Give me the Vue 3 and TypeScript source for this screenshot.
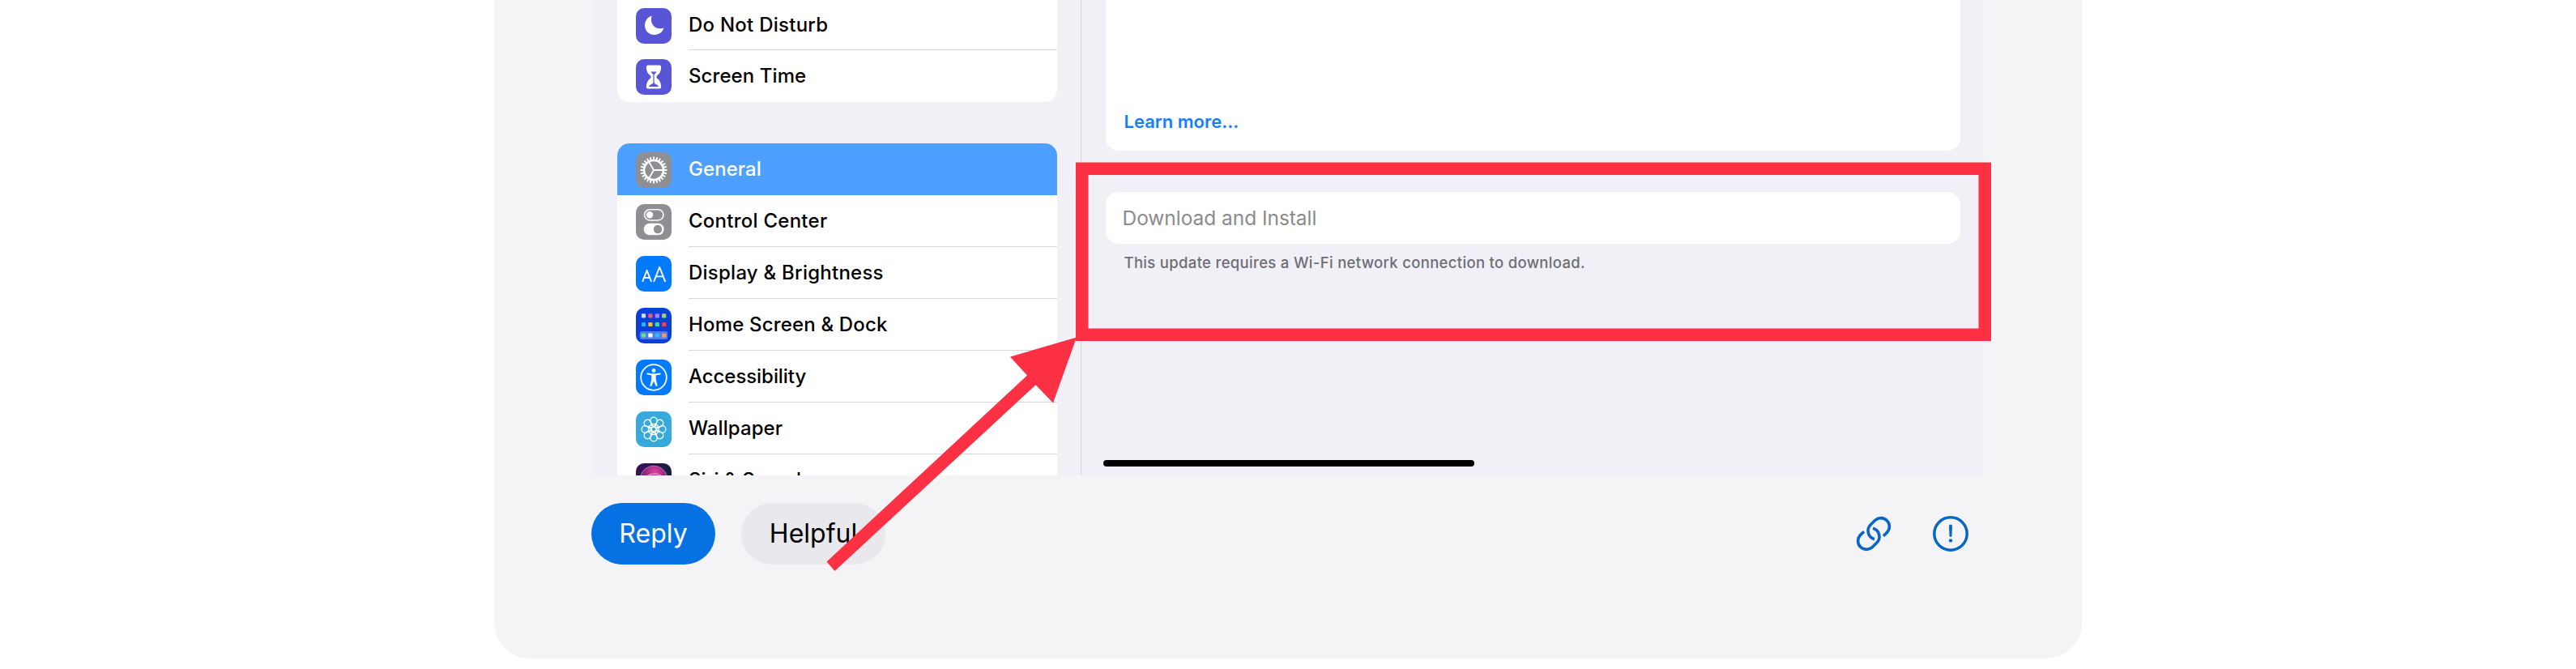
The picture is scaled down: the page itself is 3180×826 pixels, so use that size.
<script setup lang="ts">
interface Item {
  icon: string
  label: string
  active?: boolean
  spacing: string
}

const focusItems: Item[] = [
  { icon: 'moon', label: 'Do Not Disturb', spacing: '0.25px' },
  { icon: 'hourglass', label: 'Screen Time', spacing: '0.08px' },
]

const generalItems: Item[] = [
  { icon: 'gear', label: 'General', active: true, spacing: '0.05px' },
  { icon: 'control', label: 'Control Center', spacing: '0.25px' },
  { icon: 'display', label: 'Display & Brightness', spacing: '0.24px' },
  { icon: 'home', label: 'Home Screen & Dock', spacing: '0.17px' },
  { icon: 'access', label: 'Accessibility', spacing: '-0.06px' },
  { icon: 'wallpaper', label: 'Wallpaper', spacing: '0.08px' },
  { icon: 'siri', label: 'Siri & Search', spacing: '0.1px' },
]

const groups = [focusItems, generalItems]

const teeth = Array.from({ length: 24 }, (_, i) => i * 15)
const petals = Array.from({ length: 8 }, (_, i) => i * 45)

const apps = [
  ['#d5d9ea', '#f4567c', '#b27bfb', '#a5d65a'],
  ['#1fb6ff', '#fdbc1f', '#3fd8a8', '#f04444'],
  ['#5fe686', '#ffffff', '#22c3ff', '#f79b5c'],
]
const appRows = [7.3, 17.9, 31.4]
</script>

<template>
  <div class="page">
    <main class="card">
      <section class="shot">
        <aside class="sidebar">
          <div v-for="(group, g) in groups" :key="g" class="group" :class="{ top: g === 0 }">
            <div v-for="item in group" :key="item.label" class="row" :class="{ active: item.active }">
              <svg class="icon" viewBox="0 0 44 44">
                <template v-if="item.icon === 'moon'">
                  <rect width="44" height="44" rx="10" fill="#5856d6" />
                  <path d="M19.6 9.4C14.2 11.2 11 15.8 11 21.2C11 28 16.2 33 22.8 33C28.4 33 33 29.8 34.4 24.6C24.6 27.6 16.400 20 19.6 9.400Z" fill="#fff" />
                </template>
                <template v-else-if="item.icon === 'hourglass'">
                  <rect width="44" height="44" rx="10" fill="#5856d6" />
                  <path d="M15.200 7.500H28.800C30.800 7.500 31.300 8.600 31.100 10.400C30.700 15.500 29.200 17.700 26.200 20.200C25.200 21.100 25.200 22.900 26.200 23.800C29.200 26.300 30.700 28.500 31.100 33.600C31.300 35.400 30.800 36.500 28.800 36.500H15.200C13.200 36.500 12.700 35.400 12.900 33.600C13.300 28.500 14.800 26.300 17.800 23.800C18.800 22.900 18.800 21.100 17.800 20.200C14.800 17.700 13.300 15.500 12.900 10.400C12.700 8.600 13.200 7.500 15.200 7.500Z" fill="#fff" />
                  <path d="M18.300 15.400H25.700C25 17 23 18 22.600 19.200V29C23 30.800 27.400 31.500 28 34H16C16.600 31.500 21 30.800 21.400 29V19.200C21 18 19 17 18.300 15.400Z" fill="#5856d6" />
                </template>
                <template v-else-if="item.icon === 'gear'">
                  <rect width="44" height="44" rx="10" fill="#8e8e93" />
                  <g stroke="#fff" fill="none">
                    <circle cx="22" cy="22" r="12" stroke-width="2.600" />
                    <line v-for="a in teeth" :key="a" x1="22" y1="5.600" x2="22" y2="9.500" stroke-width="2" :transform="`rotate(${a} 22 22)`" />
                    <path d="M22 22H34M22 22L16 11.600M22 22L16 32.400" stroke-width="1.800" />
                  </g>
                </template>
                <template v-else-if="item.icon === 'control'">
                  <rect width="44" height="44" rx="10" fill="#8e8e93" />
                  <rect x="10.500" y="6.700" width="23.500" height="13.200" rx="6.600" fill="none" stroke="#fff" stroke-width="1.500" />
                  <circle cx="17" cy="13.300" r="4.200" fill="#fff" />
                  <rect x="9.700" y="23.700" width="25" height="14.600" rx="7.300" fill="#fff" />
                  <circle cx="27" cy="31" r="5.200" fill="#8e8e93" />
                </template>
                <template v-else-if="item.icon === 'display'">
                  <rect width="44" height="44" rx="10" fill="#007aff" />
                  <g fill="none" stroke="#fff" stroke-width="1.900" stroke-linecap="round" stroke-linejoin="round">
                    <path d="M8.400 31.200L13.600 17.800L18.800 31.200M10.100 27H17.100" />
                    <path d="M22.400 31.200L29.200 13.800L36 31.200M24.800 25.400H33.600" />
                  </g>
                </template>
                <template v-else-if="item.icon === 'home'">
                  <rect width="44" height="44" rx="10" fill="#0b3fd9" />
                  <rect x="4.800" y="29" width="34.400" height="10" rx="2.500" fill="#527be8" />
                  <template v-for="(colors, r) in apps" :key="r">
                    <rect v-for="(c, i) in colors" :key="i" :x="6.900 + i * 8.400" :y="appRows[r]" width="5.200" height="5.200" rx="1.200" :fill="c" />
                  </template>
                </template>
                <template v-else-if="item.icon === 'access'">
                  <rect width="44" height="44" rx="10" fill="#007aff" />
                  <circle cx="22" cy="22" r="15.800" fill="none" stroke="#fff" stroke-width="1.800" />
                  <circle cx="22" cy="13.500" r="2.400" fill="#fff" />
                  <path d="M14.400 17.500L20 18.400H24L29.600 17.500" fill="none" stroke="#fff" stroke-width="2" stroke-linecap="round" />
                  <path d="M19.600 17.800H24.400V24.500L26.400 32.200L24.900 32.700L22.300 26.500H21.700L19.100 32.700L17.600 32.200L19.600 24.500Z" fill="#fff" stroke="#fff" stroke-width="0.600" stroke-linejoin="round" />
                </template>
                <template v-else-if="item.icon === 'wallpaper'">
                  <rect width="44" height="44" rx="10" fill="#36aadc" />
                  <g fill="none" stroke="#fff" stroke-width="1.300">
                    <circle v-for="a in petals" :key="a" cx="22" cy="11.400" r="4.300" :transform="`rotate(${a} 22 22)`" />
                    <path v-for="a in petals" :key="'p' + a" d="M22 19.200L18.800 14.300M22 19.200L25.200 14.300" :transform="`rotate(${a} 22 22)`" />
                    <circle cx="22" cy="22" r="2.800" />
                  </g>
                </template>
                <template v-else>
                  <defs>
                    <linearGradient id="siriBack" x1="0" x2="1">
                      <stop offset="0" stop-color="#3d0d5c" />
                      <stop offset="1" stop-color="#172238" />
                    </linearGradient>
                    <radialGradient id="siriOrb" cx="0.550" cy="0.220" r="0.600">
                      <stop offset="0" stop-color="#e0409c" />
                      <stop offset="0.500" stop-color="#a52b85" />
                      <stop offset="1" stop-color="#5a2a8a" />
                    </radialGradient>
                  </defs>
                  <rect width="44" height="44" rx="10" fill="url(#siriBack)" />
                  <circle cx="22" cy="20" r="16.800" fill="url(#siriOrb)" stroke="#a778a8" stroke-width="1" />
                  <path d="M8 20C16 16 17 12 21 13.500C25 11 30 15 36 18" fill="none" stroke="#d58bd2" stroke-width="1.500" />
                </template>
              </svg>
              <div class="label"><span :style="{ letterSpacing: item.spacing }">{{ item.label }}</span></div>
            </div>
          </div>
        </aside>

        <section class="detail">
          <div class="panel notes"><a class="learn">Learn more...</a></div>
          <div class="panel install">Download and Install</div>
          <p class="hint">This update requires a Wi-Fi network connection to download.</p>
          <div class="home-bar"></div>
        </section>
      </section>

      <footer class="actions">
        <button class="pill reply">Reply</button>
        <button class="pill helpful">Helpful</button>
        <div class="tools">
          <svg viewBox="0 0 44 44" fill="none" stroke="#0a66c4" stroke-width="3.600">
            <path d="M34 24.700L38.900 19.900A10.500 10.500 0 0 0 24.100 5.100L18.100 11.100A10.500 10.500 0 0 0 23 28.700" />
            <path d="M10 19.300L5.100 24.100A10.500 10.500 0 0 0 19.900 38.900L25.900 32.900A10.500 10.500 0 0 0 21 15.300" />
          </svg>
          <svg viewBox="0 0 44 44" fill="none" stroke="#0a66c4">
            <circle cx="22" cy="22" r="20.200" stroke-width="3.500" />
            <path d="M20 12.600a2 2 0 0 1 4 0L23.500 24.500a1.500 1.500 0 0 1-3 0Z" fill="#0a66c4" stroke="none" />
            <circle cx="22" cy="30.400" r="2.200" fill="#0a66c4" stroke="none" />
          </svg>
        </div>
      </footer>
    </main>

    <svg class="annotation" viewBox="0 0 3180 826">
      <rect x="1335.750" y="208.250" width="1114.500" height="205" fill="none" stroke="#fd3044" stroke-width="15.500" />
      <polygon points="1329,416.500 1247,440.500 1268,463.500 1020.500,693.500 1030.500,705 1278.500,475.300 1300,497.500" fill="#fd3044" />
    </svg>
  </div>
</template>

<style>
body {
  margin: 0;
  background: #fff;
}
</style>

<style scoped>
.page {
  position: relative;
  width: 3180px;
  height: 826px;
  overflow: hidden;
  background: #fff;
  font-family: Inter, "Liberation Sans", sans-serif;
}
.card {
  width: 1960px;
  height: 813px;
  margin-left: 610px;
  background: #f4f4f7;
  border-radius: 0 0 44px 44px;
}
.shot {
  display: flex;
  width: 1716px;
  height: 587px;
  margin-left: 122px;
  overflow: hidden;
  background: #f1f0f7;
}
.sidebar {
  box-sizing: border-box;
  flex: none;
  width: 603px;
  height: 587px;
  padding: 0 29px 0 29.5px;
  border-right: 1.500px solid #d2d1d6;
}
.group {
  overflow: hidden;
  border-radius: 15px;
  background: #fff;
}
.group.top {
  height: 126px;
  margin-bottom: 51px;
  border-radius: 0 0 15px 15px;
}
.row {
  box-sizing: border-box;
  display: flex;
  align-items: center;
  height: 64px;
  padding-left: 23px;
}
.group.top .row:first-child {
  height: 62px;
}
.icon {
  flex: none;
  width: 44px;
  height: 44px;
  margin-top: 1px;
}
.label {
  box-sizing: border-box;
  display: flex;
  align-items: center;
  flex: 1;
  height: 100%;
  margin-left: 21.500px;
  border-bottom: 1px solid #d6d6d8;
  font-size: 24px;
  font-weight: 500;
  line-height: 30px;
  color: #000;
  white-space: nowrap;
}
.row:last-child .label,
.row.active .label {
  border-bottom-color: transparent;
}
.row.active {
  background: #4da0ff;
}
.row.active .label {
  color: #fff;
}
.detail {
  display: flex;
  flex-direction: column;
  width: 1055px;
  margin-left: 29.500px;
}
.panel {
  box-sizing: border-box;
  background: #fff;
}
.notes {
  display: flex;
  align-items: flex-end;
  height: 186px;
  padding: 0 23px 21px;
  border-radius: 0 0 16px 16px;
}
.learn {
  font-size: 22px;
  font-weight: 600;
  line-height: 30px;
  color: #157efb;
}
.install {
  height: 64px;
  margin-top: 51px;
  padding-left: 21px;
  border-radius: 16px;
  font-size: 24.500px;
  letter-spacing: -0.050px;
  line-height: 64px;
  color: #8b8b8c;
}
.hint {
  margin: 10px 0 0 23px;
  font-size: 18.500px;
  font-weight: 500;
  letter-spacing: 0.320px;
  line-height: 26px;
  color: #6e6e74;
  white-space: nowrap;
}
.home-bar {
  width: 458px;
  height: 8px;
  margin: 231px 0 0 -2.500px;
  border-radius: 4px;
  background: #000;
}
.actions {
  display: flex;
  align-items: center;
  padding: 34px 140px 0 120px;
}
.pill {
  box-sizing: border-box;
  height: 76px;
  padding: 0;
  border: 0;
  border-radius: 38px;
  font-family: inherit;
  font-size: 32px;
  line-height: 76px;
}
.reply {
  width: 153px;
  background: #0671e3;
  color: #fff;
}
.helpful {
  width: 178px;
  margin-left: 32px;
  background: #e8e8ed;
  color: #000;
}
.tools {
  display: flex;
  gap: 51px;
  margin-left: auto;
}
.tools svg {
  width: 44px;
  height: 44px;
}
.annotation {
  position: absolute;
  inset: 0;
  width: 3180px;
  height: 826px;
}
</style>
